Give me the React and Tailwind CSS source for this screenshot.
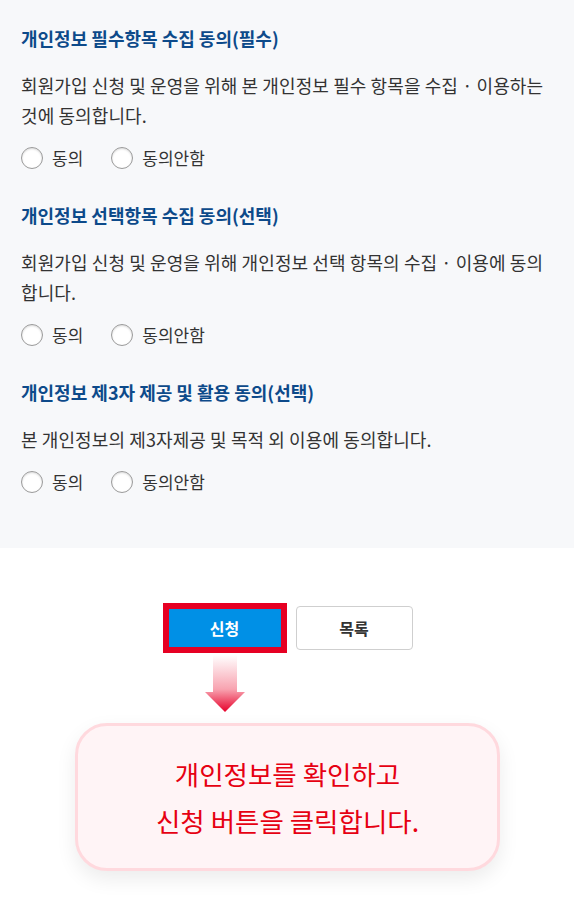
const sections = [
  {
    title: '개인정보 필수항목 수집 동의(필수)',
    body: '회원가입 신청 및 운영을 위해 본 개인정보 필수 항목을 수집 · 이용하는 것에 동의합니다.',
    name: 'agree1',
  },
  {
    title: '개인정보 선택항목 수집 동의(선택)',
    body: '회원가입 신청 및 운영을 위해 개인정보 선택 항목의 수집 · 이용에 동의합니다.',
    name: 'agree2',
  },
  {
    title: '개인정보 제3자 제공 및 활용 동의(선택)',
    body: '본 개인정보의 제3자제공 및 목적 외 이용에 동의합니다.',
    name: 'agree3',
  },
];

function Radio({ label }) {
  return (
    <label className="flex items-center gap-[9px] h-6 text-[17px] text-[#333]">
      <span className="w-[22px] h-[22px] rounded-full bg-white border-[1.5px] border-[#9a9a9a] shadow-[inset_0_1px_2px_rgba(0,0,0,0.15)]" />
      <span>{label}</span>
    </label>
  );
}

function Section({ title, body }) {
  return (
    <div>
      <h3 className="text-[18px] leading-6 font-bold text-[#0d4a8a]">{title}</h3>
      <p className="mt-5 text-[18px] leading-[30px] text-[#333] tracking-[0.1px] pr-[22px]">{body}</p>
      <div className="mt-4 flex items-center gap-[28px]">
        <Radio label="동의" />
        <Radio label="동의안함" />
      </div>
    </div>
  );
}

function DownArrow() {
  return (
    <svg width="40" height="57" viewBox="0 0 40 57">
      <defs>
        <linearGradient id="arrowGrad" x1="0" y1="0" x2="0" y2="1">
          <stop offset="0" stopColor="#ffffff" />
          <stop offset="0.6" stopColor="#f8a3b0" />
          <stop offset="1" stopColor="#e6002a" />
        </linearGradient>
      </defs>
      <path d="M8 0 H32 V37 H40 L20 57 L0 37 H8 Z" fill="url(#arrowGrad)" />
    </svg>
  );
}

export default function App() {
  return (
    <div
      className="w-[574px] min-h-[908px] bg-white"
      style={{ fontFamily: '"Noto Sans CJK KR", "Noto Sans", sans-serif' }}
    >
      {/* Agreements */}
      <div className="bg-[#f7f8fa] pt-[26px] pb-[54px] pl-[21px] pr-[2px] flex flex-col gap-[33px]">
        {sections.map((s) => (
          <Section key={s.name} title={s.title} body={s.body} />
        ))}
      </div>

      {/* Buttons */}
      <div className="mt-[55px] flex justify-center items-center gap-[9px] pl-[1px]">
        <button className="w-[124px] h-[50px] border-[6px] border-[#e60023] bg-[#0090e6] text-white text-[16px] font-bold">
          신청
        </button>
        <button className="w-[117px] h-[44px] rounded-[4px] border border-[#cfcfcf] bg-white text-[#333] text-[16px] font-bold">
          목록
        </button>
      </div>

      {/* Arrow */}
      <div className="w-[250px] mx-auto pl-[1px]">
        <div className="w-[124px] flex justify-center pt-[2px]">
          <DownArrow />
        </div>
      </div>

      {/* Callout */}
      <div className="mt-[11px] flex justify-center pl-[1px]">
        <div className="w-[425px] h-[148px] rounded-[32px] border-[3px] border-[#ffd9de] bg-[#fff4f6] shadow-[0_8px_20px_rgba(0,0,0,0.08)] flex flex-col items-center justify-center text-[26.5px] leading-[47px] text-[#e60012]">
          <p>개인정보를 확인하고</p>
          <p>신청 버튼을 클릭합니다.</p>
        </div>
      </div>
    </div>
  );
}
